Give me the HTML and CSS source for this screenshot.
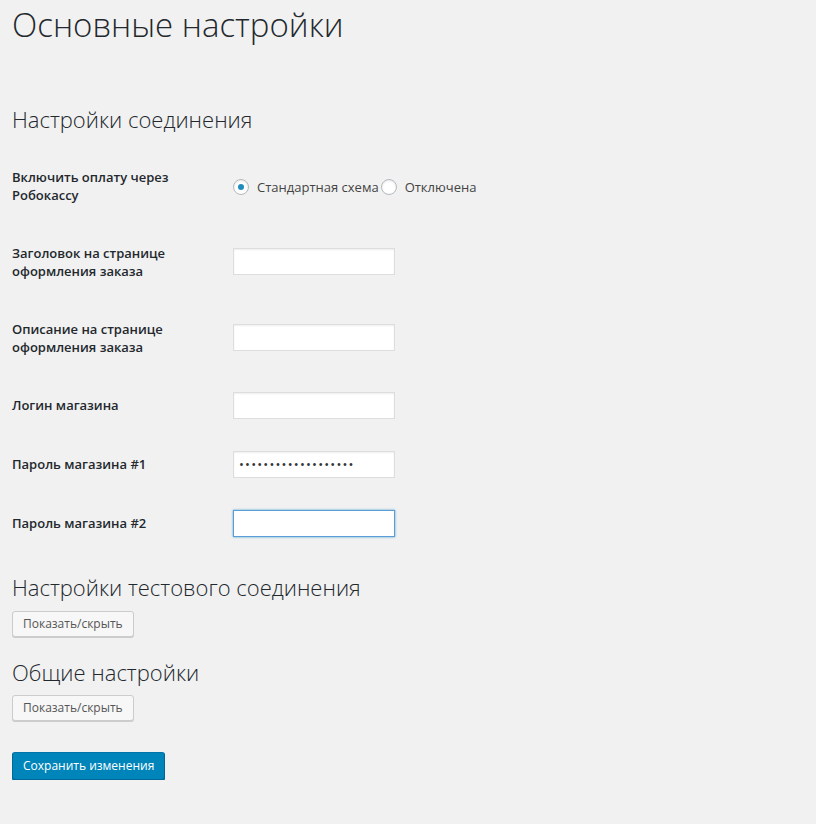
FILE: index.html
```html
<!DOCTYPE html>
<html lang="ru">
<head>
    <meta charset="UTF-8">
    <meta name="viewport" content="width=device-width, initial-scale=1.0">
    <title>Основные настройки</title>
    <link rel="stylesheet" href="styles.css">
</head>
<body>
    <div class="wrap">
        <h1>Основные настройки</h1>

        <form class="settings-form">
            <h2>Настройки соединения</h2>
            <table class="form-table">
                <tbody>
                    <tr>
                        <th>Включить оплату через Робокассу</th>
                        <td>
                            <div class="radio-group"><label class="radio-label"><input type="radio" name="mode" value="standard" checked> Стандартная схема</label><label class="radio-label"><input type="radio" name="mode" value="off"> Отключена</label></div>
                        </td>
                    </tr>
                    <tr>
                        <th>Заголовок на странице оформления заказа</th>
                        <td><input type="text" class="regular-text"></td>
                    </tr>
                    <tr>
                        <th>Описание на странице оформления заказа</th>
                        <td><input type="text" class="regular-text"></td>
                    </tr>
                    <tr>
                        <th>Логин магазина</th>
                        <td><input type="text" class="regular-text"></td>
                    </tr>
                    <tr>
                        <th>Пароль магазина #1</th>
                        <td><input type="password" class="regular-text" value="robokassapass123456"></td>
                    </tr>
                    <tr>
                        <th>Пароль магазина #2</th>
                        <td><input type="password" class="regular-text is-focused"></td>
                    </tr>
                </tbody>
            </table>

            <h2>Настройки тестового соединения</h2>
            <button type="button" class="button">Показать/скрыть</button>

            <h2>Общие настройки</h2>
            <button type="button" class="button">Показать/скрыть</button>

            <p class="submit">
                <button type="submit" class="button button-primary">Сохранить изменения</button>
            </p>
        </form>
    </div>
</body>
</html>
```

FILE: styles.css
```css
body {
    margin: 0;
    background-color: #f1f1f1;
    color: #444;
    font-family: "Open Sans", "Noto Sans", sans-serif;
    font-size: 13px;
    line-height: 1.4;
}
.wrap {
    margin: 0 12px;
    padding-top: 1px;
}
h1 {
    margin: 2px 0 0;
    font-size: 33px;
    font-weight: 300;
    line-height: 44px;
    color: #23282d;
}
h2 {
    margin: 0;
    font-size: 22px;
    font-weight: 300;
    color: #23282d;
}
.settings-form > h2:first-child {
    margin-top: 57px;
}

/* Form table */
.form-table {
    border-collapse: collapse;
    margin-top: 13px;
    width: 100%;
}
.form-table th {
    width: 211px;
    padding: 20px 10px 20px 0;
    text-align: left;
    vertical-align: top;
    font-size: 13px;
    font-weight: 600;
    line-height: 18px;
    color: #23282d;
}
.form-table td {
    padding: 15px 0;
    vertical-align: middle;
}
.form-table + h2 {
    margin-top: 19px;
}

/* Inputs */
input.regular-text {
    box-sizing: border-box;
    width: 162px;
    height: 27px;
    margin: 1px 0;
    padding: 3px 5px;
    border: 1px solid #ddd;
    background: #fff;
    box-shadow: inset 0 1px 2px rgba(0, 0, 0, 0.07);
    font-family: inherit;
    font-size: 13px;
    color: #32373c;
    outline: none;
}
input[type="password"] {
    letter-spacing: 1.2px;
}
input.is-focused {
    border-color: #5b9dd9;
    box-shadow: 0 0 2px rgba(30, 140, 190, 0.8);
}

.radio-group {
    display: flex;
    margin-top: 2px;
}
.radio-label {
    display: inline-flex;
    align-items: center;
    color: #444;
}
.radio-label input {
    appearance: none;
    box-sizing: border-box;
    width: 16px;
    height: 16px;
    margin: 0 8px 0 0;
    border: 1px solid #b4b9be;
    border-radius: 50%;
    background: #fff;
    box-shadow: inset 0 1px 2px rgba(0, 0, 0, 0.1);
    position: relative;
}
.radio-label input:checked::before {
    content: "";
    position: absolute;
    left: 4px;
    top: 4px;
    width: 6px;
    height: 6px;
    border-radius: 50%;
    background: #1e8cbe;
}
.radio-label + .radio-label input {
    margin-left: 2px;
}

/* Buttons */
.button {
    display: inline-block;
    height: 26px;
    margin: 8px 0 0;
    padding: 0 10px 1px;
    border: 1px solid #ccc;
    border-radius: 3px;
    background: #f7f7f7;
    box-shadow: 0 1px 0 #ccc;
    color: #555;
    font-family: inherit;
    font-size: 12px;
    line-height: 24px;
    cursor: pointer;
}
.button + h2 {
    margin-top: 20px;
}
.submit {
    margin: 31px 0 0;
}
.button-primary {
    height: 28px;
    margin: 0;
    background: #0085ba;
    border-color: #0073aa #006799 #006799;
    box-shadow: 0 1px 0 #006799;
    color: #fff;
    line-height: 26px;
}
```
